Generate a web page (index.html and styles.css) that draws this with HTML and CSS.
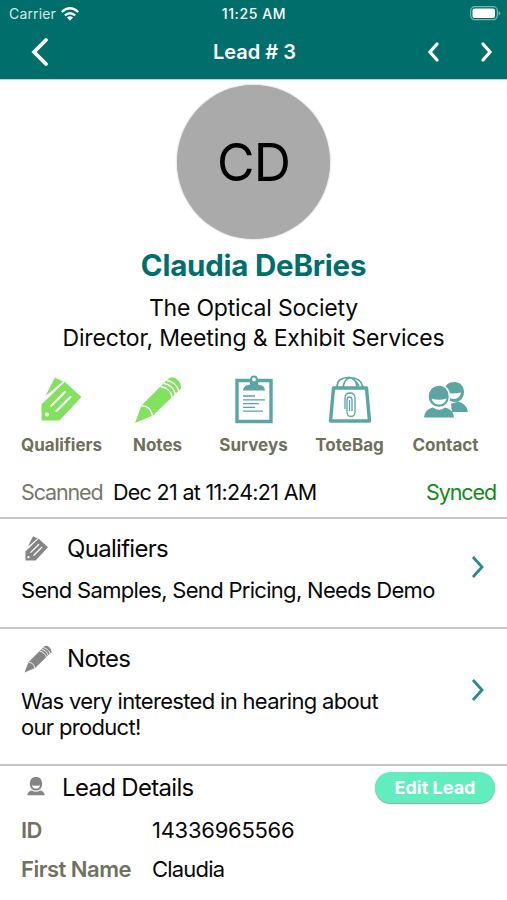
FILE: index.html
```html
<!DOCTYPE html>
<html lang="en">
<head>
<meta charset="utf-8">
<title>Lead # 3</title>
<link rel="stylesheet" href="styles.css">
</head>
<body>
<svg class="defs" width="0" height="0" aria-hidden="true">
  <symbol id="tags" viewBox="0 0 42 46">
    <path fill="currentColor" d="M4.500 19 14 .5 22 4.500Z"/>
    <path fill="currentColor" d="M.5 27 23.500 4.500 40.500 20 18.500 43.500H.5Z"/>
    <path fill="none" stroke="#fff" stroke-width="1.300" d="M1.500 25.500 24 3.500"/>
    <path fill="none" stroke="#fff" stroke-width="2.200" stroke-linecap="round" d="M10 29 24 15M15.500 34 29.500 20"/>
    <circle cx="6" cy="37.500" r="1.900" fill="#fff"/>
  </symbol>
  <symbol id="pencil" viewBox="0 0 48 48">
    <path fill="currentColor" d="M1 47 7.500 29.500 34 3Q38-.5 42.500 3Q47.500 7 47 12.500L19 39.500Z"/>
    <path fill="none" stroke="#fff" stroke-width="1.500" d="M7.500 30Q16 29 18.500 39.500M26.500 10.500Q36 12 38.500 21.500M30 7.500Q39 9 41.500 18.500M33 4.500Q42 6 45 15.500"/>
  </symbol>
  <symbol id="person" viewBox="0 0 26 28">
    <path fill="currentColor" d="M13 0C19 0 22 4 22 10S18.500 20 13 20 4 16 4 10 7 0 13 0ZM0 27Q1 21 7 20Q13 23.500 19 20Q25 21 26 27Z"/>
    <path fill="#fff" d="M7 12Q13 14 19 12Q18 17 13 17T7 12Z"/>
  </symbol>
</svg>
<header class="header">
  <div class="status">
    <span class="carrier">Carrier</span>
    <svg class="wifi" viewBox="0 0 18 14"><path fill="none" stroke="#fff" stroke-width="2.300" d="M.8 5Q9-2.500 17.200 5M3.800 8.400Q9 4 14.200 8.400"/><path fill="#fff" d="M6 10.500Q9 8.200 12 10.500L9 13.800Z"/></svg>
    <span class="time">11:25 AM</span>
    <svg class="battery" viewBox="0 0 31 15"><rect x=".7" y=".7" width="26.600" height="13" rx="4" fill="none" stroke="#78b5b0" stroke-width="1.200"/><rect x="2.500" y="2.500" width="22.500" height="9.400" rx="2" fill="#fff"/><path d="M28.500 5Q32 7.300 28.500 9.600Z" fill="#78b5b0"/></svg>
  </div>
  <nav class="nav">
    <svg class="back" viewBox="0 0 18 30"><path d="M15 3 3 15 15 27"/></svg>
    <h1 class="title">Lead # 3</h1>
    <svg class="prev" viewBox="0 0 12 20"><path d="M9 2 2 10 9 18"/></svg>
    <svg class="next" viewBox="0 0 12 20"><path d="M2 2 9 10 2 18"/></svg>
  </nav>
</header>
<main>
  <section class="profile">
    <div class="avatar"><span>CD</span></div>
    <h2 class="name">Claudia DeBries</h2>
    <p class="org">The Optical Society</p>
    <p class="role">Director, Meeting &amp; Exhibit Services</p>
  </section>
  <section class="actions">
    <div class="action done"><svg class="a-tags"><use href="#tags"/></svg><span>Qualifiers</span></div>
    <div class="action done"><svg class="a-pencil"><use href="#pencil"/></svg><span>Notes</span></div>
    <div class="action"><svg class="a-survey" viewBox="0 0 38 49">
      <path fill="none" stroke="currentColor" stroke-width="3.400" d="M2 5.500H36V46.500H2Z"/>
      <path fill="currentColor" d="M8 15.500Q8 10.500 15 9.500V5H23V9.500Q30 10.500 30 15.500Z"/>
      <circle cx="19" cy="4.500" r="2.900" fill="#fff" stroke="currentColor" stroke-width="2"/>
      <path fill="none" stroke="currentColor" stroke-width="1.300" d="M8 21H20M8 24.800H30M8 28.600H24M8 32.400H20M8 36.200H28"/></svg><span>Surveys</span></div>
    <div class="action"><svg class="a-tote" viewBox="0 0 44 48">
      <path fill="none" stroke="currentColor" stroke-width="3.400" stroke-linejoin="round" d="M5.500 12H38.500L41.500 45H2.500Z"/>
      <path fill="none" stroke="currentColor" stroke-width="1.600" d="M9 11Q9 1.500 21 1.500T35 11M15 11Q17 2 22 2Q28 2 29 11M19 2Q25 0 31 10"/>
      <path fill="none" stroke="currentColor" stroke-width="1.300" d="M17 33V22Q17 17 22 17T27 22V36Q27 40.500 23 40.500T19 36V24Q19 21 21.500 21T24 24V35M21.500 24V35"/></svg><span>ToteBag</span></div>
    <div class="action"><svg class="a-contact" viewBox="0 0 44 38">
      <path fill="currentColor" d="M30 1C36 1 40 5 40 11S36 21 31 21 20 17 20 11 24 1 30 1ZM27 23 34 20.500Q43 23 44 31H28Z"/>
      <path fill="#fff" d="M23 12Q30 13 37 11.500Q36 18 30 18T23 12Z"/>
      <path fill="currentColor" stroke="#fff" stroke-width="1.500" d="M15 4C21 4 25.500 9 25.500 15.500S21 26.500 15 26.500 4 22 4 15.500 9 4 15 4Z"/>
      <path fill="currentColor" d="M0 36.500Q1 28 9 26.500Q15 31 21 26.500Q29 28 30 36.500Z"/>
      <path fill="#fff" d="M7.500 17.500Q15 20 22.500 17.500Q21 23.500 15 23.500T7.500 17.500Z"/></svg><span>Contact</span></div>
  </section>
  <div class="scan"><span class="muted">Scanned</span><span class="when">Dec 21 at 11:24:21 AM</span><span class="synced">Synced</span></div>
  <section class="card qualifiers">
    <div class="body">
      <h3><svg class="s-tags"><use href="#tags"/></svg><span>Qualifiers</span></h3>
      <p class="q-text">Send Samples, Send Pricing, Needs Demo</p>
    </div>
    <svg class="go" viewBox="0 0 14 24"><path d="M2 2 11 12 2 22"/></svg>
  </section>
  <section class="card notes">
    <div class="body">
      <h3><svg class="s-pencil"><use href="#pencil"/></svg><span>Notes</span></h3>
      <p class="n-text">Was very interested in hearing about<br>our product!</p>
    </div>
    <svg class="go" viewBox="0 0 14 24"><path d="M2 2 11 12 2 22"/></svg>
  </section>
  <section class="details">
    <div class="details-head"><svg class="s-person"><use href="#person"/></svg><h3 class="h-d">Lead Details</h3><button class="edit">Edit Lead</button></div>
    <dl>
      <dt>ID</dt><dd class="number">14336965566</dd>
      <dt>First Name</dt><dd>Claudia</dd>
      <dt class="last">Last Name</dt><dd class="last">DeBries</dd>
    </dl>
  </section>
</main>
</body>
</html>
```

FILE: styles.css
```css
* { box-sizing: border-box; }
body { margin: 0; height: 900px; overflow: hidden; background: #fff; color: #080808; font-family: Inter, "Liberation Sans", sans-serif; font-size: 22px; }
h1, h2, h3, p, dl, dd { margin: 0; font-weight: 400; }
svg { display: block; flex: none; color: inherit; }
.defs { position: absolute; }
span, p, h1, h2, h3, dt, dd { white-space: nowrap; }

.header { height: 80px; background: #006f6b; color: #fff; border-bottom: 1px solid #b9d9d9; }
.status { height: 27px; padding: 0 6px 0 9px; display: grid; grid-template-columns: 52px 148px 90px 1fr 31px; align-items: center; font-size: 14px; }
.carrier { letter-spacing: .15px; color: #d5e8e7; }
.wifi { width: 18px; height: 14px; }
.time { text-align: center; font-weight: 500; font-size: 14px; letter-spacing: .6px; }
.battery { width: 31px; height: 15px; grid-column: 5; }
.nav { height: 52px; padding: 0 14px 2px 31px; display: grid; grid-template-columns: 18px 1fr 12px 41px 12px; align-items: center; }
.nav path { fill: none; stroke: #fff; stroke-width: 3.2; stroke-linecap: round; }
.nav .back path { stroke-width: 3.8; }
.back { width: 18px; height: 30px; }
.title { font-size: 20px; font-weight: 600; text-align: center; padding-left: 32px; }
.prev, .next { width: 12px; height: 20px; }
.next { grid-column: 5; }

.profile { display: flex; flex-direction: column; align-items: center; padding-top: 5px; height: 291px; }
.avatar { width: 153px; height: 154px; border-radius: 50%; background: #aaa; display: flex; align-items: center; justify-content: center; font-size: 51.5px; letter-spacing: -1px; box-shadow: 0 0 2px #aaa; color: #000; }
.name { margin-top: 8px; line-height: 36px; font-size: 29.5px; font-weight: 700; letter-spacing: -.22px; color: #006f6b; }
.org { margin-top: 11px; line-height: 29px; font-size: 23px; letter-spacing: -.2px; }
.role { line-height: 30px; font-size: 23px; letter-spacing: -.17px; }

.actions { height: 96px; padding: 0 13.5px; display: grid; grid-template-columns: repeat(5, 96px); }
.action { display: flex; flex-direction: column; align-items: center; justify-content: flex-end; color: #5ba5a2; }
.action.done { color: #83e160; }
.action span { line-height: 26px; margin-bottom: 9px; font-size: 17px; font-weight: 700; color: #6f6f5c; }
.action .a-tags { width: 42px; height: 46px; margin-bottom: 9px; }
.action .a-pencil { width: 48px; height: 48px; margin-bottom: 8px; }
.action .a-survey { width: 38px; height: 49px; margin-bottom: 8px; }
.action .a-tote { width: 44px; height: 48px; margin-bottom: 8px; }
.action .a-contact { width: 44px; height: 38px; margin-bottom: 13px; }

.scan { height: 52px; padding: 0 11px 0 21px; display: flex; align-items: center; border-bottom: 2px solid #c6c6c6; font-size: 21.5px; }
.muted { color: #77776a; letter-spacing: -1.15px; }
.when { margin-left: 10.5px; letter-spacing: -.69px; }
.synced { margin-left: auto; color: #14891a; letter-spacing: -1.1px; }

.card { display: flex; align-items: center; justify-content: space-between; padding: 0 22px 0 21px; border-bottom: 2px solid #c6c6c6; }
.qualifiers { height: 110px; }
.notes { height: 137px; }
.body { align-self: flex-start; padding-top: 14px; }
.card h3 { display: grid; grid-template-columns: 46px auto; align-items: center; line-height: 32px; font-size: 24px; letter-spacing: -.7px; }
.card h3 svg { color: #858585; }
.s-tags { width: 24px; height: 26px; margin-left: 4px; }
.s-pencil { width: 28px; height: 28px; margin-left: 3px; }
.q-text { margin-top: 10px; line-height: 30px; letter-spacing: -.7px; }
.n-text { margin-top: 13px; line-height: 26px; letter-spacing: -.68px; }
.go { width: 14px; height: 24px; margin-top: -13px; }
.go path { fill: none; stroke: #288b86; stroke-width: 2.8; }

.details-head { height: 45px; padding: 5px 12px 0 27px; display: flex; align-items: flex-start; }
.s-person { width: 18px; height: 19px; margin-top: 6px; color: #858585; }
.h-d { margin-left: 17px; line-height: 33px; font-size: 24px; letter-spacing: -.68px; }
.edit { margin: 1px 0 0 auto; width: 120px; height: 31px; border: 0; border-radius: 16px; padding: 0; background: #61edbd; color: #fff; font: 700 18px/30px Inter, sans-serif; box-shadow: 0 1px 1px #88a99d; }
dl { display: grid; grid-template-columns: 131px auto; grid-auto-rows: 38.5px; padding-left: 21px; line-height: 39px; }
dt { font-weight: 600; color: #717160; letter-spacing: -.5px; }
dd { letter-spacing: -.8px; }
.number { letter-spacing: -.27px; }
.last { padding-top: 3px; }
```
